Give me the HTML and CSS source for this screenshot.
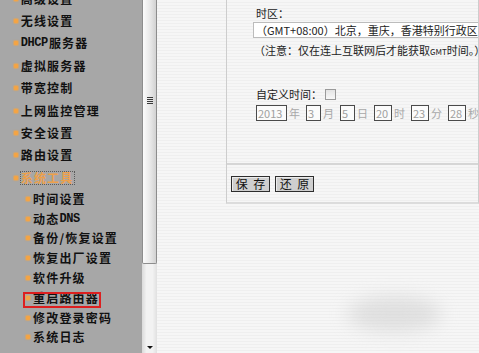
FILE: index.html
```html
<!DOCTYPE html>
<html lang="zh-CN">
<head>
<meta charset="utf-8">
<title>系统工具 - 时间设置</title>
<link rel="stylesheet" href="styles.css">
</head>
<body>
<div class="page">
  <nav class="sidebar">
    <ul class="menu">
      <li class="item"><span class="dot"></span>高级设置</li>
      <li class="item"><span class="dot"></span>无线设置</li>
      <li class="item"><span class="dot"></span><span class="latin">DHCP</span>服务器</li>
      <li class="item"><span class="dot"></span>虚拟服务器</li>
      <li class="item"><span class="dot"></span>带宽控制</li>
      <li class="item"><span class="dot"></span>上网监控管理</li>
      <li class="item"><span class="dot"></span>安全设置</li>
      <li class="item"><span class="dot"></span>路由设置</li>
      <li class="item active"><span class="dot"></span><span class="focus">系统工具</span></li>
      <li class="item sub"><span class="dot"></span>时间设置</li>
      <li class="item sub"><span class="dot"></span>动态<span class="latin">DNS</span></li>
      <li class="item sub"><span class="dot"></span>备份/恢复设置</li>
      <li class="item sub"><span class="dot"></span>恢复出厂设置</li>
      <li class="item sub"><span class="dot"></span>软件升级</li>
      <li class="item sub marked"><span class="dot"></span>重启路由器</li>
      <li class="item sub"><span class="dot"></span>修改登录密码</li>
      <li class="item sub"><span class="dot"></span>系统日志</li>
    </ul>
  </nav>
  <div class="scrollbar">
    <div class="thumb"><div class="grip"><i></i><i></i><i></i><i></i></div></div>
    <div class="arrow"></div>
  </div>
  <main class="main">
    <section class="panel">
      <div class="form">
        <div class="label">时区：</div>
        <div class="select">（GMT+08:00）北京，重庆，香港特别行政区，乌鲁木齐</div>
        <div class="note">（注意：仅在连上互联网后才能获取<span class="tiny">GMT</span>时间。）</div>
        <div class="label custom">自定义时间：<span class="check"></span></div>
        <div class="dates">
          <span class="box w31">2013</span><span class="unit">年</span>
          <span class="box w15">3</span><span class="unit">月</span>
          <span class="box w15">5</span><span class="unit">日</span>
          <span class="box w18">20</span><span class="unit">时</span>
          <span class="box w18">23</span><span class="unit">分</span>
          <span class="box w18">28</span><span class="unit">秒</span>
        </div>
      </div>
      <div class="actions">
        <button class="btn" type="button">保 存</button>
        <button class="btn" type="button">还 原</button>
      </div>
    </section>
    <div class="watermark"></div>
  </main>
</div>
</body>
</html>
```
FILE: styles.css
```css
html, body {
  margin: 0;
  padding: 0;
  width: 479px;
  height: 353px;
  overflow: hidden;
}
body {
  font-family: "Noto Sans CJK SC", "Liberation Sans", sans-serif;
}
.page {
  display: flex;
  height: 353px;
}

/* ---------- left menu ---------- */
.sidebar {
  width: 142px;
  flex: none;
  background: #a7a7a7;
  overflow: hidden;
}
.menu {
  list-style: none;
  margin: -12.6px 0 0;
  padding: 0;
}
.item {
  display: flex;
  align-items: center;
  height: 22.4px;
  padding-left: 14px;
  font-size: 12px;
  line-height: 1;
  font-weight: 700;
  letter-spacing: 1.2px;
  color: #111;
  white-space: nowrap;
}
.item .dot {
  flex: none;
  width: 4px;
  height: 4px;
  margin-right: 2.7px;
  background: #f4a444;
  border-radius: 1px;
  box-shadow: 0 0 1px 1px rgba(244, 164, 68, 0.55);
}
.item.sub {
  height: 19.8px;
  padding-left: 26px;
}
.item.sub .dot {
  margin-right: 3px;
}
.latin {
  font-family: "Liberation Mono", monospace;
  font-size: 12px;
  letter-spacing: -0.4px;
  margin-right: 1px;
}
.focus {
  color: #eda04a;
  outline: 1px dotted #5a5a5a;
  outline-offset: 0;
}
.marked {
  position: relative;
}
.marked::after {
  content: "";
  position: absolute;
  left: 23px;
  top: 4px;
  width: 78px;
  height: 16px;
  box-sizing: border-box;
  border: 2px solid #dd1f1f;
}

/* ---------- scrollbar ---------- */
.scrollbar {
  width: 15px;
  flex: none;
  display: flex;
  flex-direction: column;
  background: linear-gradient(to right, #dadada, #f2f2f2 30%, #f2f2f2 70%, #e0e0e0);
}
.thumb {
  height: 264px;
  box-sizing: border-box;
  border: 1px solid #8d8d8d;
  border-top: 0;
  border-radius: 0 0 2px 2px;
  background: linear-gradient(to right, #fbfbfb, #e6e6e6 60%, #d2d2d2);
  padding-top: 97px;
  display: flex;
  justify-content: center;
}
.grip {
  display: flex;
  flex-direction: column;
  gap: 1px;
}
.grip i {
  display: block;
  width: 6px;
  height: 1px;
  background: #3a3a3a;
}
.arrow {
  margin-top: auto;
  margin-bottom: 4px;
  align-self: center;
  width: 0;
  height: 0;
  border-left: 3px solid transparent;
  border-right: 3px solid transparent;
  border-top: 3px solid #111;
}

/* ---------- main content ---------- */
.main {
  flex: 1;
  position: relative;
  overflow: hidden;
  padding-left: 69px;
  background: repeating-linear-gradient(to bottom, #f6f6f6 0, #f6f6f6 2px, #efefef 2px, #efefef 3px);
}
.panel {
  border-left: 1px solid #cdcdcd;
  border-right: 1px solid #cdcdcd;
  border-bottom: 2px solid #dcdcdc;
}
.form {
  height: 163px;
  box-sizing: border-box;
  padding: 4px 0 0 26px;
  white-space: nowrap;
  overflow: hidden;
  font-size: 11px;
  color: #222;
}
.label {
  line-height: 18px;
  margin-left: 3px;
}
.select {
  height: 16px;
  box-sizing: border-box;
  border: 1px solid #bcbcbc;
  border-right: 0;
  background: #fff;
  line-height: 14px;
  padding-left: 2px;
  overflow: hidden;
}
.note {
  margin-top: 3px;
  margin-left: 1px;
  line-height: 18px;
}
.tiny {
  font-size: 8px;
}
.custom {
  margin-top: 24px;
  display: flex;
  align-items: center;
}
.check {
  width: 11px;
  height: 11px;
  box-sizing: border-box;
  margin-left: 3px;
  border: 1px solid #9a9a9a;
  background: linear-gradient(#e4e4e4, #f8f8f8);
}
.dates {
  margin-top: 2px;
  margin-left: 3px;
  display: flex;
  align-items: center;
  color: #a8a8a8;
}
.box {
  flex: none;
  height: 16px;
  box-sizing: border-box;
  border: 1px solid #4a4a4a;
  background: #fbfbfb;
  line-height: 14px;
  padding-left: 1px;
  color: #a0a0a0;
}
.w31 { width: 31px; }
.w15 { width: 15px; }
.w18 { width: 18px; }
.unit {
  flex: none;
  width: 19px;
  box-sizing: border-box;
  padding-left: 2px;
}
.actions {
  border-top: 2px solid #d6d6d6;
  padding: 11px 0 10px 4px;
  display: flex;
  gap: 5px;
}
.btn {
  width: 39px;
  height: 16px;
  padding: 0;
  border: 1px solid #2e2e2e;
  background: #cfcfcf;
  box-shadow: inset 1px 1px 0 #ececec;
  font-family: "Noto Sans CJK SC", sans-serif;
  font-size: 12px;
  line-height: 14px;
  word-spacing: 3px;
  color: #111;
}
.watermark {
  position: absolute;
  left: 190px;
  top: 296px;
  width: 95px;
  height: 36px;
  border-radius: 50%;
  background: #cfcfcf;
  filter: blur(9px);
  opacity: 0.55;
}
```
